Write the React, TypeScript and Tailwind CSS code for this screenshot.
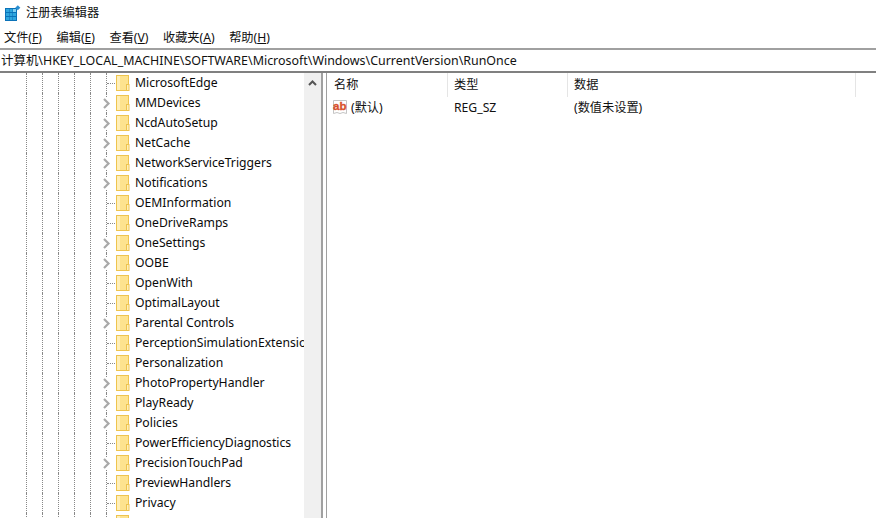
const rows: [string, boolean][] = [
  ["MicrosoftEdge", false],
  ["MMDevices", true],
  ["NcdAutoSetup", true],
  ["NetCache", true],
  ["NetworkServiceTriggers", true],
  ["Notifications", true],
  ["OEMInformation", false],
  ["OneDriveRamps", false],
  ["OneSettings", true],
  ["OOBE", true],
  ["OpenWith", false],
  ["OptimalLayout", false],
  ["Parental Controls", true],
  ["PerceptionSimulationExtensions", false],
  ["Personalization", false],
  ["PhotoPropertyHandler", true],
  ["PlayReady", true],
  ["Policies", true],
  ["PowerEfficiencyDiagnostics", false],
  ["PrecisionTouchPad", true],
  ["PreviewHandlers", false],
  ["Privacy", false],
  ["", false],
];

const font = { fontFamily: '"Noto Sans", "Noto Sans CJK SC", sans-serif' };

function Folder() {
  return (
    <svg width="16" height="16" viewBox="0 0 16 16" className="shrink-0">
      <rect x="1.5" y="0.5" width="12" height="15" fill="#fde38f" stroke="#eec44f" />
      <rect x="2" y="1" width="3" height="14" fill="#ffefb9" />
      <rect x="11.5" y="9.5" width="2.5" height="6" fill="#ffefb9" stroke="#eec44f" />
    </svg>
  );
}

function Row({ name, arrow }: { name: string; arrow: boolean }) {
  return (
    <div className="flex items-center h-5 shrink-0">
      {[0, 1, 2, 3, 4].map((i) => (
        <div key={i} className="w-4 h-full shrink-0 border-l border-dotted border-[#888]" />
      ))}
      <div className="relative w-[9px] h-full shrink-0 border-l border-dotted border-[#888]">
        {arrow ? (
          <svg width="9" height="11" viewBox="0 0 9 11" className="absolute left-[-5px] top-[5px] bg-white">
            <path d="M2 1 L6.5 5.5 L2 10" fill="none" stroke="#a9a9a9" strokeWidth="2.2" />
          </svg>
        ) : (
          <div className="absolute left-0 top-[10px] w-[8px] border-t border-dotted border-[#888]" />
        )}
      </div>
      <Folder />
      <span className="ml-[4px] text-[12.2px] leading-5 text-[#0a0a0a] whitespace-nowrap">{name}</span>
    </div>
  );
}

export default function App() {
  return (
    <div className="w-[876px] h-[518px] bg-white flex flex-col overflow-hidden text-black" style={font}>
      <div className="h-[26px] flex items-center shrink-0 pl-[5px] gap-[5px]">
        <svg width="16" height="16" viewBox="0 0 16 16">
          <rect x="0" y="3" width="12" height="13" fill="#0b72b8" />
          <g fill="#2fa6de">
            <rect x="1" y="4" width="3" height="3" />
            <rect x="4.5" y="4" width="3" height="3" />
            <rect x="8" y="4" width="3" height="3" fill="#7fd0f2" />
            <rect x="1" y="8" width="3" height="3" />
            <rect x="4.5" y="8" width="3" height="3" />
            <rect x="8" y="8" width="3" height="3" />
            <rect x="1" y="12" width="3" height="3" />
            <rect x="4.5" y="12" width="3" height="3" />
            <rect x="8" y="12" width="3" height="3" />
          </g>
          <rect x="11" y="1" width="3.6" height="3.6" transform="rotate(45 12.8 2.8)" fill="#2a8ed0" />
        </svg>
        <span className="text-[12.2px] text-[#111] pt-[1px]">注册表编辑器</span>
      </div>
      <div className="h-[22px] flex items-center shrink-0 pl-[4px] gap-[14.5px] text-[12.2px] text-[#111] pt-[2px]">
        <span>文件(<u>F</u>)</span>
        <span>编辑(<u>E</u>)</span>
        <span>查看(<u>V</u>)</span>
        <span>收藏夹(<u>A</u>)</span>
        <span>帮助(<u>H</u>)</span>
      </div>
      <div className="h-[25px] shrink-0 border-t-2 border-t-[#a0a0a0] border-b-2 border-b-[#808080] flex items-center pl-px pt-[1px] text-[12.45px] text-[#111] whitespace-nowrap">
        计算机\HKEY_LOCAL_MACHINE\SOFTWARE\Microsoft\Windows\CurrentVersion\RunOnce
      </div>
      <div className="flex-1 flex min-h-0">
        <div className="w-[304px] shrink-0 flex flex-col pl-[26px] overflow-hidden">
          {rows.map((r, i) => (
            <Row key={i} name={r[0]} arrow={r[1]} />
          ))}
        </div>
        <div className="w-[17px] shrink-0 bg-[#f0f0f0] flex justify-center pt-[7px]">
          <svg width="9" height="6" viewBox="0 0 9 6">
            <path d="M1 5 L4.5 1.5 L8 5" fill="none" stroke="#555" strokeWidth="2" />
          </svg>
        </div>
        <div className="w-[6px] shrink-0 border-l-2 border-l-[#a0a0a0] border-r border-r-[#a0a0a0]" />
        <div className="flex-1 flex flex-col min-w-0">
          <div className="h-[24px] flex text-[12.2px] text-[#111] shrink-0">
            <div className="w-[121px] border-r border-[#e5e5e5] pl-[7px] flex items-center">名称</div>
            <div className="w-[120px] border-r border-[#e5e5e5] pl-[6px] flex items-center">类型</div>
            <div className="w-[288px] border-r border-[#e5e5e5] pl-[6px] flex items-center">数据</div>
          </div>
          <div className="h-5 flex items-center text-[12.2px] text-[#111]">
            <div className="w-[121px] flex items-center pl-[5px]">
              <svg width="17" height="16" viewBox="0 0 17 16" className="shrink-0">
                <path d="M1.5 1.5 H14.5 V14.5 L11 13.5 L8 14.5 L5 13.5 L1.5 14.5 Z" fill="#fff" stroke="#c4c4c4" />
                <text x="1" y="10.5" fontSize="11.5" fontWeight="700" fill="#d8512c" stroke="#d8512c" strokeWidth="0.35" fontFamily="Liberation Sans">ab</text>
              </svg>
              <span className="ml-[2px] pt-[2px]">(默认)</span>
            </div>
            <div className="w-[120px] pl-[6px] pt-[2px]">REG_SZ</div>
            <div className="pl-[6px] pt-[2px]">(数值未设置)</div>
          </div>
        </div>
      </div>
    </div>
  );
}
